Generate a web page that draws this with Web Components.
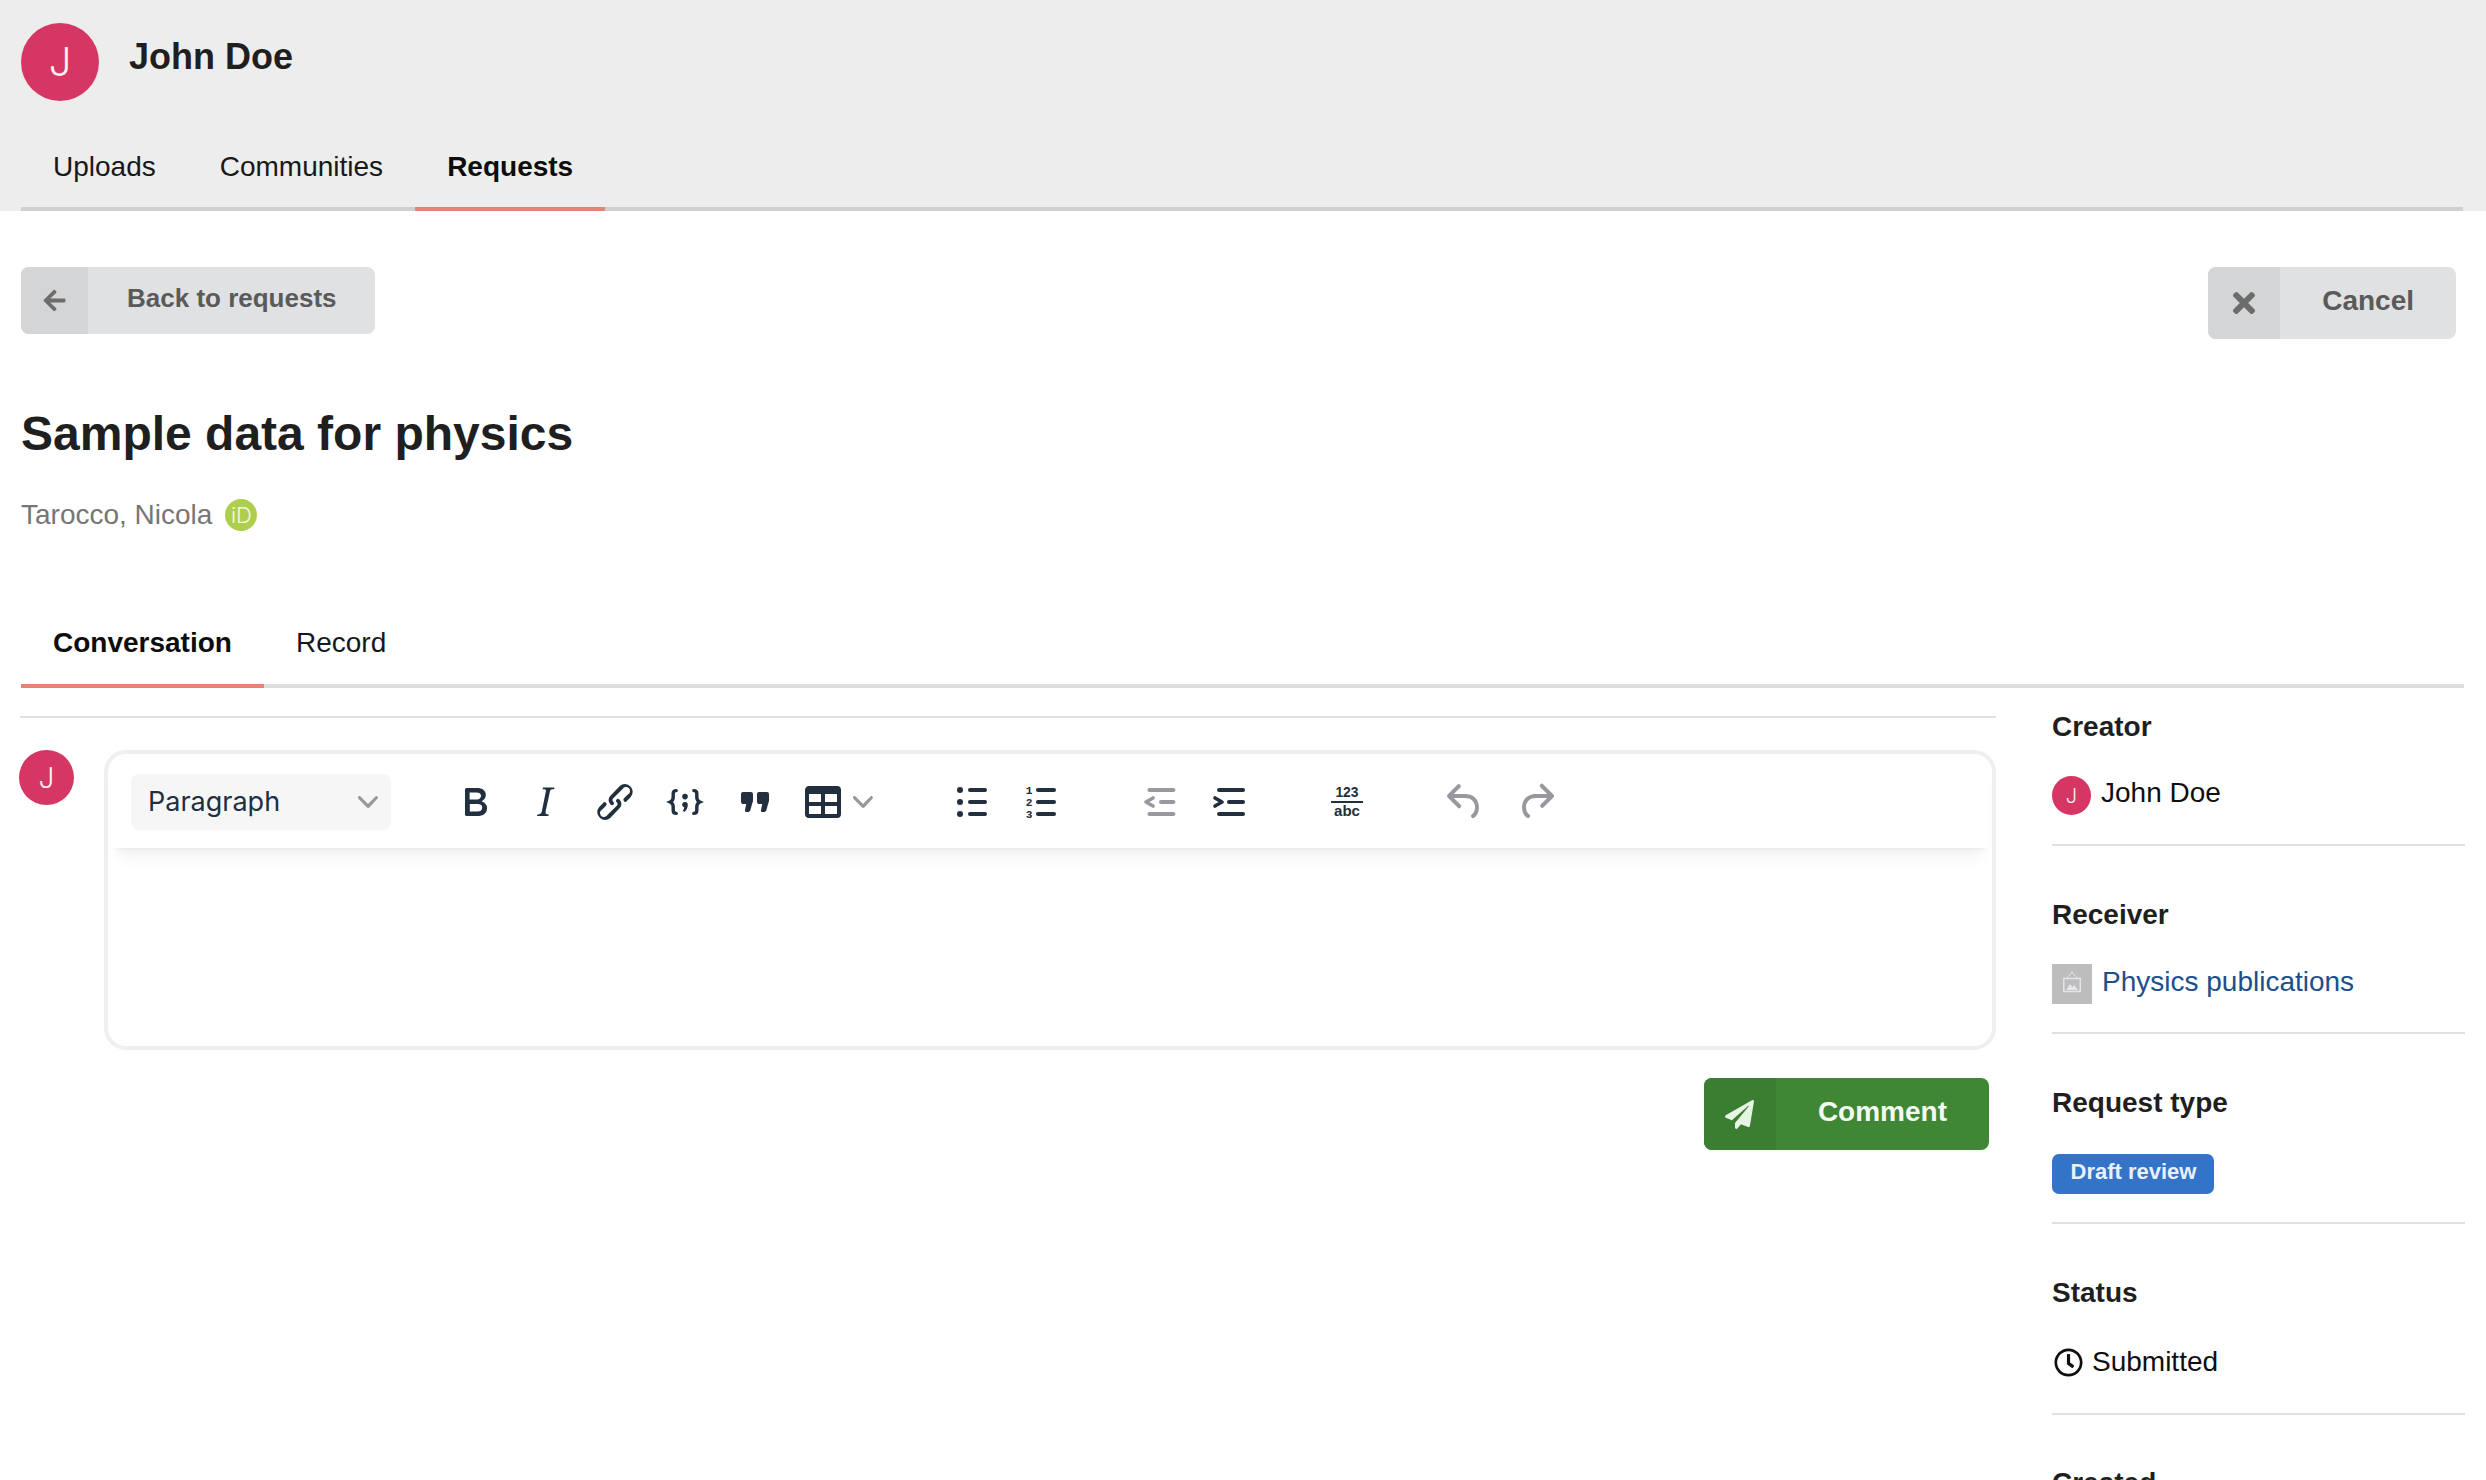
<!DOCTYPE html>
<html lang="en"><head><meta charset="utf-8"><title>Sample data for physics</title>
<style>
html,body{margin:0;padding:0;height:1480px;overflow:hidden;background:#fff}
body{font-family:"Liberation Sans",Arial,sans-serif;font-size:28px;line-height:40px;color:#1f1f1f}
</style></head>
<body>
<request-page></request-page>
<script>
const ICONS={
 bold:'<path d="M7.8 19c-.3 0-.5 0-.6-.2l-.2-.5V5.7c0-.2 0-.4.2-.5l.6-.2h5c1.5 0 2.7.3 3.5 1 .7.6 1.1 1.4 1.1 2.5a3 3 0 01-.6 1.9c-.4.6-1 1-1.6 1.2.4.1.9.3 1.3.6s.8.7 1 1.2c.4.4.5 1 .5 1.6 0 1.3-.4 2.3-1.3 3-.8.7-2.1 1-3.8 1H7.8zm5-8.3c.6 0 1.2-.1 1.6-.5.4-.3.6-.7.6-1.3 0-1.1-.8-1.7-2.3-1.7H9.3v3.5h3.4zm.5 6c.7 0 1.3-.1 1.7-.4.4-.4.6-.9.6-1.5s-.2-1-.7-1.4c-.4-.3-1-.4-2-.4H9.4v3.8h4z"/>',
 italic:'<path d="M16.7 4.7l-.1.9h-.3c-.6 0-1 0-1.4.3-.3.3-.4.6-.5 1.1l-2.1 9.8v.6c0 .5.4.8 1.4.8h.2l-.2.8H8l.2-.8h.2c1.1 0 1.8-.5 2-1.5l2-9.8.1-.5c0-.6-.4-.8-1.4-.8h-.3l.2-.9h5.8z"/>',
 link:'<path d="M6.2 12.3a1 1 0 011.4 1.4l-2 2a2 2 0 102.6 2.8l4.8-4.8a1 1 0 000-1.4 1 1 0 111.4-1.3 2.9 2.9 0 010 4L9.6 20a3.9 3.9 0 01-5.5-5.5l2-2zm11.6-.6a1 1 0 01-1.4-1.4l2-2a2 2 0 10-2.6-2.8L11 10.3a1 1 0 000 1.4A1 1 0 119.6 13a2.9 2.9 0 010-4L14.4 4a3.9 3.9 0 015.5 5.5l-2 2z"/>',
 code:'<g fill="none" stroke="currentColor" stroke-width="1.7" stroke-linecap="round"><path d="M7.6 6.300c-1.100 0-1.500.5-1.500 1.400v1.900c0 1.100-.4 1.900-1.500 2.400 1.100.5 1.500 1.300 1.500 2.400v1.900c0 .9.4 1.400 1.500 1.400"/><path d="M16.400 6.300c1.100 0 1.500.5 1.500 1.400v1.900c0 1.100.4 1.900 1.500 2.400-1.100.5-1.500 1.300-1.500 2.400v1.900c0 .9-.4 1.400-1.500 1.400"/></g><circle cx="12" cy="9.300" r="1.400"/><path d="M10.600 13.400a1.400 1.400 0 012.800-.1c0 1.500-.6 2.800-1.700 3.700l-.8-.6c.4-.5.700-1.100.8-1.700-.6-.1-1.100-.6-1.100-1.300z"/>',
 quote:'<path d="M6 7h4a1 1 0 011 1v3.500l-1.400 4.800a1 1 0 01-1 .7h-.9a.7.7 0 01-.7-.9L7.600 13H6a1 1 0 01-1-1V8a1 1 0 011-1z"/><path transform="translate(8)" d="M6 7h4a1 1 0 011 1v3.500l-1.400 4.800a1 1 0 01-1 .7h-.9a.7.7 0 01-.7-.9L7.600 13H6a1 1 0 01-1-1V8a1 1 0 011-1z"/>',
 table:'<path fill-rule="nonzero" d="M19 4a2 2 0 012 2v12a2 2 0 01-2 2H5a2 2 0 01-2-2V6c0-1.100.9-2 2-2h14zM5 14v4h6v-4H5zm14 0h-6v4h6v-4zm0-6h-6v4h6V8zM5 12h6V8H5v4z"/>',
 bullets:'<rect x="10" y="5" width="9.500" height="2" rx="1"/><rect x="10" y="11" width="9.500" height="2" rx="1"/><rect x="10" y="17" width="9.500" height="2" rx="1"/><circle cx="6" cy="6" r="1.500"/><circle cx="6" cy="12" r="1.500"/><circle cx="6" cy="18" r="1.500"/>',
 numbers:'<rect x="9.500" y="5" width="10" height="2" rx="1"/><rect x="9.500" y="11" width="10" height="2" rx="1"/><rect x="9.500" y="17" width="10" height="2" rx="1"/><g font-family="Liberation Mono,monospace" font-weight="700" font-size="5.600" text-anchor="middle"><text x="6" y="7.900">1</text><text x="6" y="13.900">2</text><text x="6" y="19.900">3</text></g>',
 outdent:'<rect x="6.200" y="5" width="14" height="2" rx="1"/><rect x="12" y="11" width="8.200" height="2" rx="1"/><rect x="6.200" y="17" width="14" height="2" rx="1"/><path d="M9 10l-3.500 2L9 14" fill="none" stroke="currentColor" stroke-width="1.800" stroke-linecap="round" stroke-linejoin="round"/>',
 indent:'<rect x="6" y="5" width="14" height="2" rx="1"/><rect x="11" y="11" width="9" height="2" rx="1"/><rect x="6" y="17" width="14" height="2" rx="1"/><path d="M5 10l3.500 2L5 14" fill="none" stroke="currentColor" stroke-width="1.800" stroke-linecap="round" stroke-linejoin="round"/>',
 count:'<rect x="4" y="11.500" width="16" height="1"/><g font-family="Liberation Sans,sans-serif" font-weight="700" text-anchor="middle"><text x="12" y="9.700" font-size="6.900" textLength="11.600" lengthAdjust="spacingAndGlyphs">123</text><text x="12" y="19.200" font-size="7.600" textLength="13" lengthAdjust="spacingAndGlyphs">abc</text></g>',
 undo:'<path d="M6.400 8H12c3.700 0 6.200 2 6.800 5.100.6 2.700-.4 5.600-2.300 6.800a1 1 0 01-1-1.800c1.100-.7 1.800-2.700 1.400-4.600-.5-2.100-2.100-3.500-4.900-3.500H6.400l3.300 3.300a1 1 0 11-1.400 1.400l-5-5a1 1 0 010-1.400l5-5a1 1 0 011.400 1.400L6.400 8z"/>',
 redo:'<path d="M17.600 10H12c-2.800 0-4.400 1.400-4.900 3.500-.4 2 .3 4 1.400 4.600a1 1 0 11-1 1.800c-2-1.200-2.900-4.100-2.300-6.800.6-3 3-5.100 6.800-5.100h5.600l-3.300-3.300a1 1 0 111.400-1.400l5 5a1 1 0 010 1.400l-5 5a1 1 0 01-1.400-1.400l3.300-3.300z"/>'
};
const FA={
 back:['0 0 448 512','M257.5 445.1l-22.2 22.2c-9.4 9.4-24.6 9.4-33.9 0L7 273c-9.4-9.4-9.4-24.6 0-33.9L201.4 44.700c9.4-9.4 24.600-9.400 33.900 0l22.200 22.200c9.500 9.500 9.300 25-.4 34.300L136.600 216H424c13.300 0 24 10.700 24 24v32c0 13.300-10.700 24-24 24H136.600l120.500 114.800c9.800 9.300 10 24.800.4 34.300z'],
 times:['0 0 352 512','M242.720 256l100.070-100.070c12.280-12.280 12.280-32.190 0-44.480l-22.240-22.240c-12.280-12.280-32.190-12.280-44.480 0L176 189.280 75.930 89.210c-12.280-12.280-32.190-12.280-44.480 0L9.210 111.450c-12.280 12.280-12.280 32.190 0 44.480L109.280 256 9.210 356.070c-12.280 12.280-12.280 32.190 0 44.480l22.240 22.240c12.280 12.280 32.200 12.280 44.480 0L176 322.720l100.070 100.070c12.280 12.280 32.200 12.280 44.480 0l22.240-22.240c12.280-12.280 12.280-32.190 0-44.480L242.720 256z'],
 send:['0 0 512 512','M476 3.200L12.500 270.600c-18.100 10.400-15.800 35.600 2.200 43.200L121 358.400l287.300-253.200c5.500-4.900 13.300 2.600 8.600 8.300L176 407v80.500c0 23.600 28.500 32.900 42.500 15.800L282 426l124.600 52.200c14.200 6 30.400-2.900 33-18.200l72-432C515 7.800 493.300-6.800 476 3.200z'],
 clock:['0 0 512 512','M256 8C119 8 8 119 8 256s111 248 248 248 248-111 248-248S393 8 256 8zm0 448c-110.500 0-200-89.500-200-200S145.500 56 256 56s200 89.500 200 200-89.500 200-200 200zm61.800-104.400l-84.900-61.700c-3.100-2.300-4.900-5.900-4.900-9.700V116c0-6.600 5.400-12 12-12h32c6.600 0 12 5.400 12 12v141.700l66.800 48.600c5.400 3.900 6.500 11.400 2.600 16.800L334.600 349c-3.900 5.300-11.400 6.500-16.800 2.600z']
};
const CHEV='<svg width="20" height="20" viewBox="0 0 10 10" fill="#99999d"><path d="M8.700 2.200c.3-.3.8-.3 1 0 .4.4.4.9 0 1.200L5.700 7.800c-.3.3-.9.3-1.200 0L.2 3.400a.8.8 0 010-1.200c.3-.3.8-.3 1.100 0L5 6l3.700-3.800z"/></svg>';

customElements.define('fa-icon',class extends HTMLElement{constructor(){super();this.attachShadow({mode:'open'})}
 connectedCallback(){const [v,d]=FA[this.getAttribute('name')];const s=this.getAttribute('size')||24;
 this.shadowRoot.innerHTML=`<style>:host{display:inline-flex}</style><svg width="${s}" height="${s}" viewBox="${v}" fill="currentColor"><path d="${d}"/></svg>`}});

customElements.define('user-avatar',class extends HTMLElement{constructor(){super();this.attachShadow({mode:'open'}).innerHTML=`<style>:host{display:flex;flex:none;align-items:center;justify-content:center;border-radius:50%;background:#d63663;color:#fbeef2;font-family:Inter,"Liberation Sans",sans-serif;font-weight:300;line-height:1;width:var(--s);height:var(--s);font-size:var(--f)}</style><slot></slot>`}});

customElements.define('nav-tabs',class extends HTMLElement{constructor(){super();this.attachShadow({mode:'open'}).innerHTML=`<style>:host{display:flex;border-bottom:4px solid var(--line,#d0d0d3);margin-right:1px}</style><slot></slot>`}});
customElements.define('nav-tab',class extends HTMLElement{constructor(){super();this.attachShadow({mode:'open'}).innerHTML=`<style>:host{display:block;padding:var(--tab-pt,7px) 32px var(--tab-pb,21px);margin-bottom:-4px;border-bottom:4px solid transparent;font-size:28px;line-height:40px;color:#181818}:host([active]){font-weight:700;color:#0d0d0d;border-bottom-color:#e38373}</style><slot></slot>`}});

customElements.define('top-header',class extends HTMLElement{constructor(){super();this.attachShadow({mode:'open'}).innerHTML=`<style>:host{display:block;background:#ededed;padding:23px 22px 0 21px}
.who{display:flex;gap:30px;align-items:flex-start;margin-bottom:38px}.name{font-size:36px;line-height:44px;font-weight:700;color:#1f1f1f;margin-top:12px}
</style><div class="who"><user-avatar style="--s:78px;--f:40px">J</user-avatar><div class="name"><slot name="name"></slot></div></div><slot></slot>`}});

customElements.define('action-button',class extends HTMLElement{constructor(){super();this.attachShadow({mode:'open'}).innerHTML=`<style>:host{display:inline-flex;flex:none;height:var(--h,72px);border-radius:8px;overflow:hidden;background:var(--bg,#e0e1e2);color:var(--fg,#5a5a5a);font-weight:700;font-size:var(--fs,28px);line-height:40px}
.i{width:var(--h,72px);display:flex;align-items:center;justify-content:center;background:var(--ibg,#d4d5d6);color:var(--ifg,#6c6c6c)}
.t{display:flex;align-items:center;padding:var(--tp,0 42px);padding-bottom:var(--tb,4px)}</style><div class="i"><slot name="icon"></slot></div><div class="t"><slot></slot></div>`}});

customElements.define('tb-btn',class extends HTMLElement{constructor(){super();this.attachShadow({mode:'open'})}
 connectedCallback(){const n=this.getAttribute('icon');const w=this.hasAttribute('bare')?48:70;
 this.shadowRoot.innerHTML=`<style>:host{display:flex;flex:none;width:${w}px;height:56px;align-items:center;justify-content:center;color:#222f3e}:host([disabled]){color:#98999e}svg{display:block}</style><svg width="48" height="48" viewBox="0 0 24 24" fill="currentColor">${ICONS[n]}</svg>`}});

customElements.define('tb-select',class extends HTMLElement{constructor(){super();this.attachShadow({mode:'open'}).innerHTML=`<style>:host{display:flex;flex:none;box-sizing:border-box;width:260px;height:56px;align-items:center;justify-content:space-between;padding:0 13px 0 17px;background:#f6f6f7;border-radius:8px;color:#222f3e;font-family:Inter,"Liberation Sans",sans-serif;font-size:27px}svg{display:block}</style><span><slot></slot></span>${CHEV}`}});

customElements.define('editor-toolbar',class extends HTMLElement{constructor(){super();this.attachShadow({mode:'open'}).innerHTML=`<style>:host{display:flex;align-items:center;height:94px;box-sizing:border-box;padding:2px 0 0 20.500px;background:#fff;border-radius:16px 16px 0 0;box-shadow:0 4px 4px -4px rgba(34,47,62,.1),0 16px 16px -8px rgba(34,47,62,.07)}
.chev{margin:0 0 0 6px;display:flex}</style>
<tb-select>Paragraph</tb-select>
<tb-btn icon="bold" style="margin-left:49px"></tb-btn><tb-btn icon="italic"></tb-btn><tb-btn icon="link"></tb-btn><tb-btn icon="code"></tb-btn><tb-btn icon="quote"></tb-btn>
<tb-btn icon="table" bare style="margin-left:9px"></tb-btn><span class="chev">${CHEV}</span>
<tb-btn icon="bullets" style="margin-left:64px"></tb-btn><tb-btn icon="numbers" style="margin-left:-1px"></tb-btn>
<tb-btn icon="outdent" disabled style="margin-left:48px"></tb-btn><tb-btn icon="indent"></tb-btn>
<tb-btn icon="count" style="margin-left:48px"></tb-btn>
<tb-btn icon="undo" disabled style="margin-left:48px"></tb-btn><tb-btn icon="redo" disabled style="margin-left:1px"></tb-btn>`}});

customElements.define('comment-editor',class extends HTMLElement{constructor(){super();this.attachShadow({mode:'open'}).innerHTML=`<style>:host{display:block;box-sizing:border-box;height:300px;border:4px solid #eeeff0;border-radius:22px;padding:0 3px;background:#fff}</style><editor-toolbar></editor-toolbar>`}});

customElements.define('side-section',class extends HTMLElement{constructor(){super();this.attachShadow({mode:'open'}).innerHTML=`<style>:host{display:block;margin-bottom:var(--mb,49px)}
h3{margin:0;font-size:28px;line-height:40px;font-weight:700;color:#1f1f1f}
.b{margin-top:var(--mt,26px);padding-bottom:var(--pb,29px);border-bottom:2px solid #e0e0e1}</style><h3><slot name="title"></slot></h3><div class="b"><slot></slot></div>`}});

customElements.define('person-row',class extends HTMLElement{constructor(){super();this.attachShadow({mode:'open'}).innerHTML=`<style>:host{display:flex;gap:var(--rg,10px);align-items:flex-start;height:var(--rh,42px);color:#0f0f0f}.g{margin-top:var(--gt,3px);display:flex}</style><div class="g"><slot name="glyph"></slot></div><div><slot></slot></div>`}});

customElements.define('type-chip',class extends HTMLElement{constructor(){super();this.attachShadow({mode:'open'}).innerHTML=`<style>:host{display:inline-flex;box-sizing:border-box;height:40px;align-items:center;padding:0 18px 4px 18.500px;border-radius:7px;background:#3374c9;color:#e8f1fb;font-size:22px;font-weight:700;vertical-align:top}</style><slot></slot>`}});

customElements.define('orcid-mark',class extends HTMLElement{constructor(){super();this.attachShadow({mode:'open'}).innerHTML=`<style>:host{display:flex;flex:none;width:32px;height:32px;border-radius:50%;background:#aecf4e;align-items:center;justify-content:center;color:#f3f8de;font-family:Inter,"Liberation Sans",sans-serif;font-weight:300;font-size:22px;line-height:1}</style><slot></slot>`}});

customElements.define('community-thumb',class extends HTMLElement{constructor(){super();this.attachShadow({mode:'open'}).innerHTML=`<style>:host{display:flex;flex:none;width:40px;height:40px;background:#bdbdbf}</style><svg width="40" height="40" viewBox="0 0 40 40" fill="none" stroke="#e6e6e8" stroke-width="1.500"><path d="M20 8l-5 6M20 8l5 6" stroke-dasharray="1.500 1.500"/><rect x="11.800" y="14.500" width="16.500" height="13"/><path d="M14 26l4-6 2.500 3 1.800-2 3.700 5z" fill="#e6e6e8" stroke="none"/></svg>`}});

customElements.define('request-page',class extends HTMLElement{constructor(){super();this.attachShadow({mode:'open'}).innerHTML=`<style>
:host{display:block}
.main{padding:56px 21px 0 21px}
.actions{display:flex;justify-content:space-between;align-items:flex-start;padding-right:9px;height:72px}
h1{margin:67px 0 0;font-size:48px;line-height:56px;font-weight:700;color:#1f1f1f}
.author{display:flex;align-items:center;gap:13px;margin:33px 0 81px;color:#767676}
.grid{display:grid;grid-template-columns:1975px 413px;column-gap:56px;margin-top:19px;align-items:start}
.left{padding-top:9px}
.rule{height:2px;background:#e0e0e1;margin-left:-1px}
.thread{display:flex;margin:32px 0 0 -2px;gap:29.500px}
comment-editor{flex:1}
.send{display:flex;justify-content:flex-end;margin-top:28px;padding-right:7px}
a{color:#1c4f8c;text-decoration:none}
h3{margin:0;font-size:28px;line-height:40px;font-weight:700;color:#1f1f1f}
</style>
<top-header><span slot="name">John Doe</span>
 <nav-tabs style="--tab-pt:8px;--tab-pb:20px"><nav-tab>Uploads</nav-tab><nav-tab>Communities</nav-tab><nav-tab active>Requests</nav-tab></nav-tabs>
</top-header>
<div class="main">
 <div class="actions">
  <action-button style="--h:67px;--fs:26px;--tp:0 38.500px 0 39px;--tb:5px"><fa-icon slot="icon" name="back" size="25"></fa-icon>Back to requests</action-button>
  <action-button><fa-icon slot="icon" name="times" size="32"></fa-icon>Cancel</action-button>
 </div>
 <h1>Sample data for physics</h1>
 <div class="author"><span>Tarocco, Nicola</span><orcid-mark>iD</orcid-mark></div>
 <nav-tabs style="--line:#dddde0"><nav-tab active>Conversation</nav-tab><nav-tab>Record</nav-tab></nav-tabs>
 <div class="grid">
  <div class="left">
   <div class="rule"></div>
   <div class="thread"><user-avatar style="--s:55px;--f:28px">J</user-avatar><comment-editor></comment-editor></div>
   <div class="send"><action-button style="--bg:#3f8735;--ibg:#3a7e31;--fg:#f4faf3;--ifg:#e6f5e4"><fa-icon slot="icon" name="send" size="29"></fa-icon>Comment</action-button></div>
  </div>
  <div class="right">
   <side-section><span slot="title">Creator</span><person-row><user-avatar slot="glyph" style="--s:39px;--f:20px">J</user-avatar>John Doe</person-row></side-section>
   <side-section style="--mt:27px;--pb:28px"><span slot="title">Receiver</span><person-row style="--gt:2px"><community-thumb slot="glyph"></community-thumb><a href="#">Physics publications</a></person-row></side-section>
   <side-section style="--mt:31px;--pb:28px"><span slot="title">Request type</span><type-chip>Draft review</type-chip></side-section>
   <side-section style="--mt:29px;--pb:31px;--mb:48px"><span slot="title">Status</span><person-row style="--rh:40px;--gt:6px;--rg:9px"><fa-icon slot="glyph" name="clock" size="29" style="margin-left:2px"></fa-icon>Submitted</person-row></side-section>
   <h3>Created</h3>
  </div>
 </div>
</div>`}});
</script>
</body></html>
